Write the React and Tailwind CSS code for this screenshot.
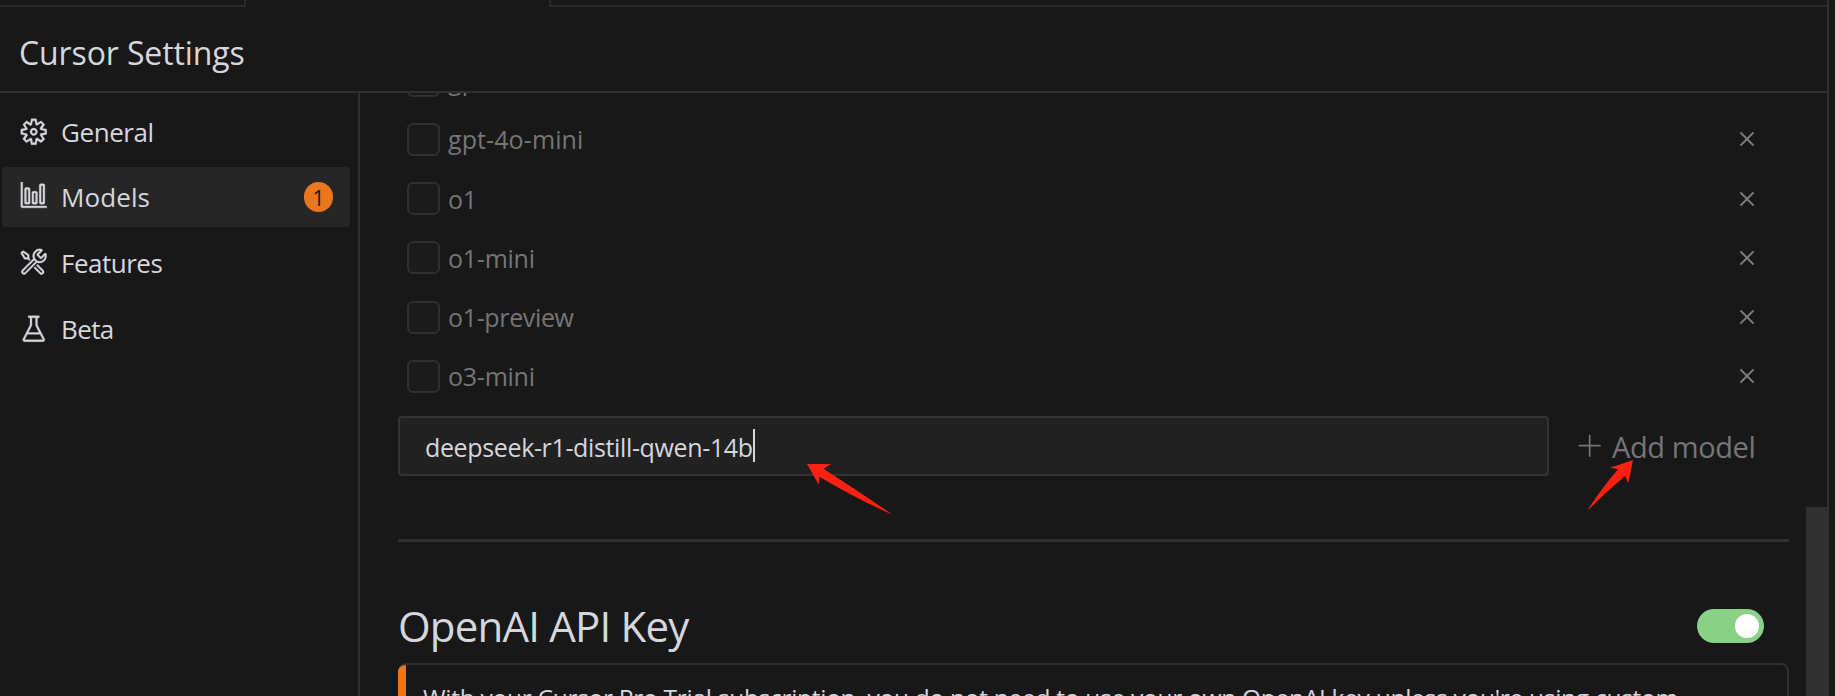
import { VscGear, VscGraph, VscTools, VscBeaker, VscClose, VscAdd } from "react-icons/vsc";

const navItems = [
  { label: "General", Icon: VscGear, tracking: "tracking-[-0.42px]", iconShift: "mt-px" },
  { label: "Models", Icon: VscGraph, tracking: "tracking-[0.1px]", iconShift: "-mt-px", active: true, badge: "1" },
  { label: "Features", Icon: VscTools, tracking: "tracking-[-0.5px]", iconShift: "-mt-px" },
  { label: "Beta", Icon: VscBeaker, tracking: "tracking-[-0.6px]", iconShift: "mt-px" },
];

const models = [
  { name: "gpt-4o", tracking: "tracking-[0.1px]" },
  { name: "gpt-4o-mini", tracking: "tracking-[0.1px]" },
  { name: "o1", tracking: "tracking-[-0.2px]" },
  { name: "o1-mini", tracking: "tracking-[-0.25px]" },
  { name: "o1-preview", tracking: "tracking-[-0.35px]" },
  { name: "o3-mini", tracking: "tracking-[-0.25px]" },
];

function TabStrip() {
  return (
    <div className="flex h-[7px] shrink-0 justify-between">
      <div className="w-[246px] border-r-2 border-b-2 border-[#2b2b2b]" />
      <div className="w-[1278px] border-b-2 border-l-2 border-[#2b2b2b]" />
    </div>
  );
}

function NavItem({ label, Icon, tracking, iconShift, active, badge }) {
  return (
    <div
      className={
        active
          ? "flex h-[60px] items-center rounded-[4px] bg-[#262626] pr-[17px] pl-[17px]"
          : "flex h-[60px] items-center pr-[17px] pl-[17px]"
      }
    >
      <span className={iconShift}>
        <Icon className="mr-[12.5px] size-[29.5px] shrink-0 stroke-[#d6d6dd] stroke-[0.2px]" />
      </span>
      <span className={`grow pt-px text-[26px] leading-[36px] ${tracking}`}>{label}</span>
      {badge && (
        <span className="flex h-[30px] w-[29px] items-center justify-center rounded-full bg-[#ea7620] pt-[2px] text-[21px] leading-[28px] text-[#181818]">
          {badge}
        </span>
      )}
    </div>
  );
}

function ModelRow({ name, tracking }) {
  return (
    <div className="flex h-[59.2px] shrink-0 items-center pr-[29px] pl-[9px]">
      <div className="size-[33px] rounded-[6px] border-2 border-[#303030] bg-[#1b1b1b]" />
      <span className={`grow pl-[8px] text-[25px] leading-[34px] text-[#757578] ${tracking}`}>{name}</span>
      <VscClose className="size-[26px] stroke-[#808082] stroke-[0.25px] text-[#808082]" />
    </div>
  );
}

export default function App() {
  return (
    <div className="relative flex h-[696px] w-[1835px] overflow-hidden bg-[#181818] font-['Open_Sans','Noto_Sans',sans-serif] text-[#d6d6dd]">
      <div className="flex w-[1829px] flex-col border-r-2 border-[#303030]">
        <TabStrip />
        <header className="flex h-[86px] shrink-0 items-center border-b-2 border-[#303030] pt-[8px] pl-[19px]">
          <h1 className="text-[32px] leading-[44px] tracking-[-0.12px]">Cursor Settings</h1>
        </header>
        <div className="flex min-h-0 grow">
          <nav className="flex w-[360px] shrink-0 flex-col gap-[5.6px] border-r-2 border-[#303030] pt-[8.4px] pr-[8px] pl-[2px]">
            {navItems.map((item) => (
              <NavItem key={item.label} {...item} />
            ))}
          </nav>
          <main className="flex grow flex-col overflow-hidden pl-[38px]">
            <div className="-mt-[42.3px] flex w-[1391px] shrink-0 flex-col">
              {models.map((model) => (
                <ModelRow key={model.name} {...model} />
              ))}
              <div className="mt-[10.1px] flex h-[60px] items-center">
                <div className="flex h-[60px] w-[1151px] items-center rounded-[4px] border-2 border-[#343434] bg-[#212121] pl-[25px]">
                  <span className="pt-[2px] text-[25px] leading-[34px] tracking-[-0.36px]">deepseek-r1-distill-qwen-14b</span>
                  <span className="h-[33px] w-[2px] bg-[#d6d6dd]" />
                </div>
                <div className="flex items-center pt-[2px] pl-[28px] text-[#757578]">
                  <VscAdd className="size-[27px]" />
                  <span className="pl-[8px] text-[29px] leading-[40px] tracking-[-0.4px]">Add model</span>
                </div>
              </div>
              <div className="mt-[63px] h-[3px] bg-[#303030]" />
              <div className="mt-[54px] flex h-[60px] items-center justify-between pr-[25px]">
                <h2 className="text-[42px] leading-[58px] tracking-[-0.8px]">OpenAI API Key</h2>
                <div className="flex h-[34px] w-[67px] items-center justify-end rounded-full bg-[#89d185] pr-[5px]">
                  <div className="size-[24px] rounded-full bg-white" />
                </div>
              </div>
              <div className="mt-[7px] flex h-[120px] overflow-hidden rounded-[8px] border-2 border-l-0 border-[#303030]">
                <div className="-my-[2px] w-[8px] shrink-0 bg-[#ea7620]" />
                <p className="pt-[15px] pl-[17px] text-[24.5px] leading-[36px] tracking-[-0.28px] whitespace-nowrap">
                  With your Cursor Pro Trial subscription, you do not need to use your own OpenAI key unless you're using custom
                </p>
              </div>
            </div>
          </main>
          <div className="flex w-[21px] shrink-0 flex-col justify-end">
            <div className="h-[189px] bg-[#303030]" />
          </div>
        </div>
      </div>
      <svg className="absolute top-0 left-0" width="1835" height="696" fill="#ff2012">
        <path d="M807 464L831 464L823.5 468.7Q860 492 892.4 514.7Q855 498 819.4 476.7L818.7 484.7Z" />
        <path d="M1633 460L1628.3 483.3L1625 476Q1605 493 1587.3 510.7Q1601 489 1618 469.3L1610.3 467.7Z" />
      </svg>
    </div>
  );
}
